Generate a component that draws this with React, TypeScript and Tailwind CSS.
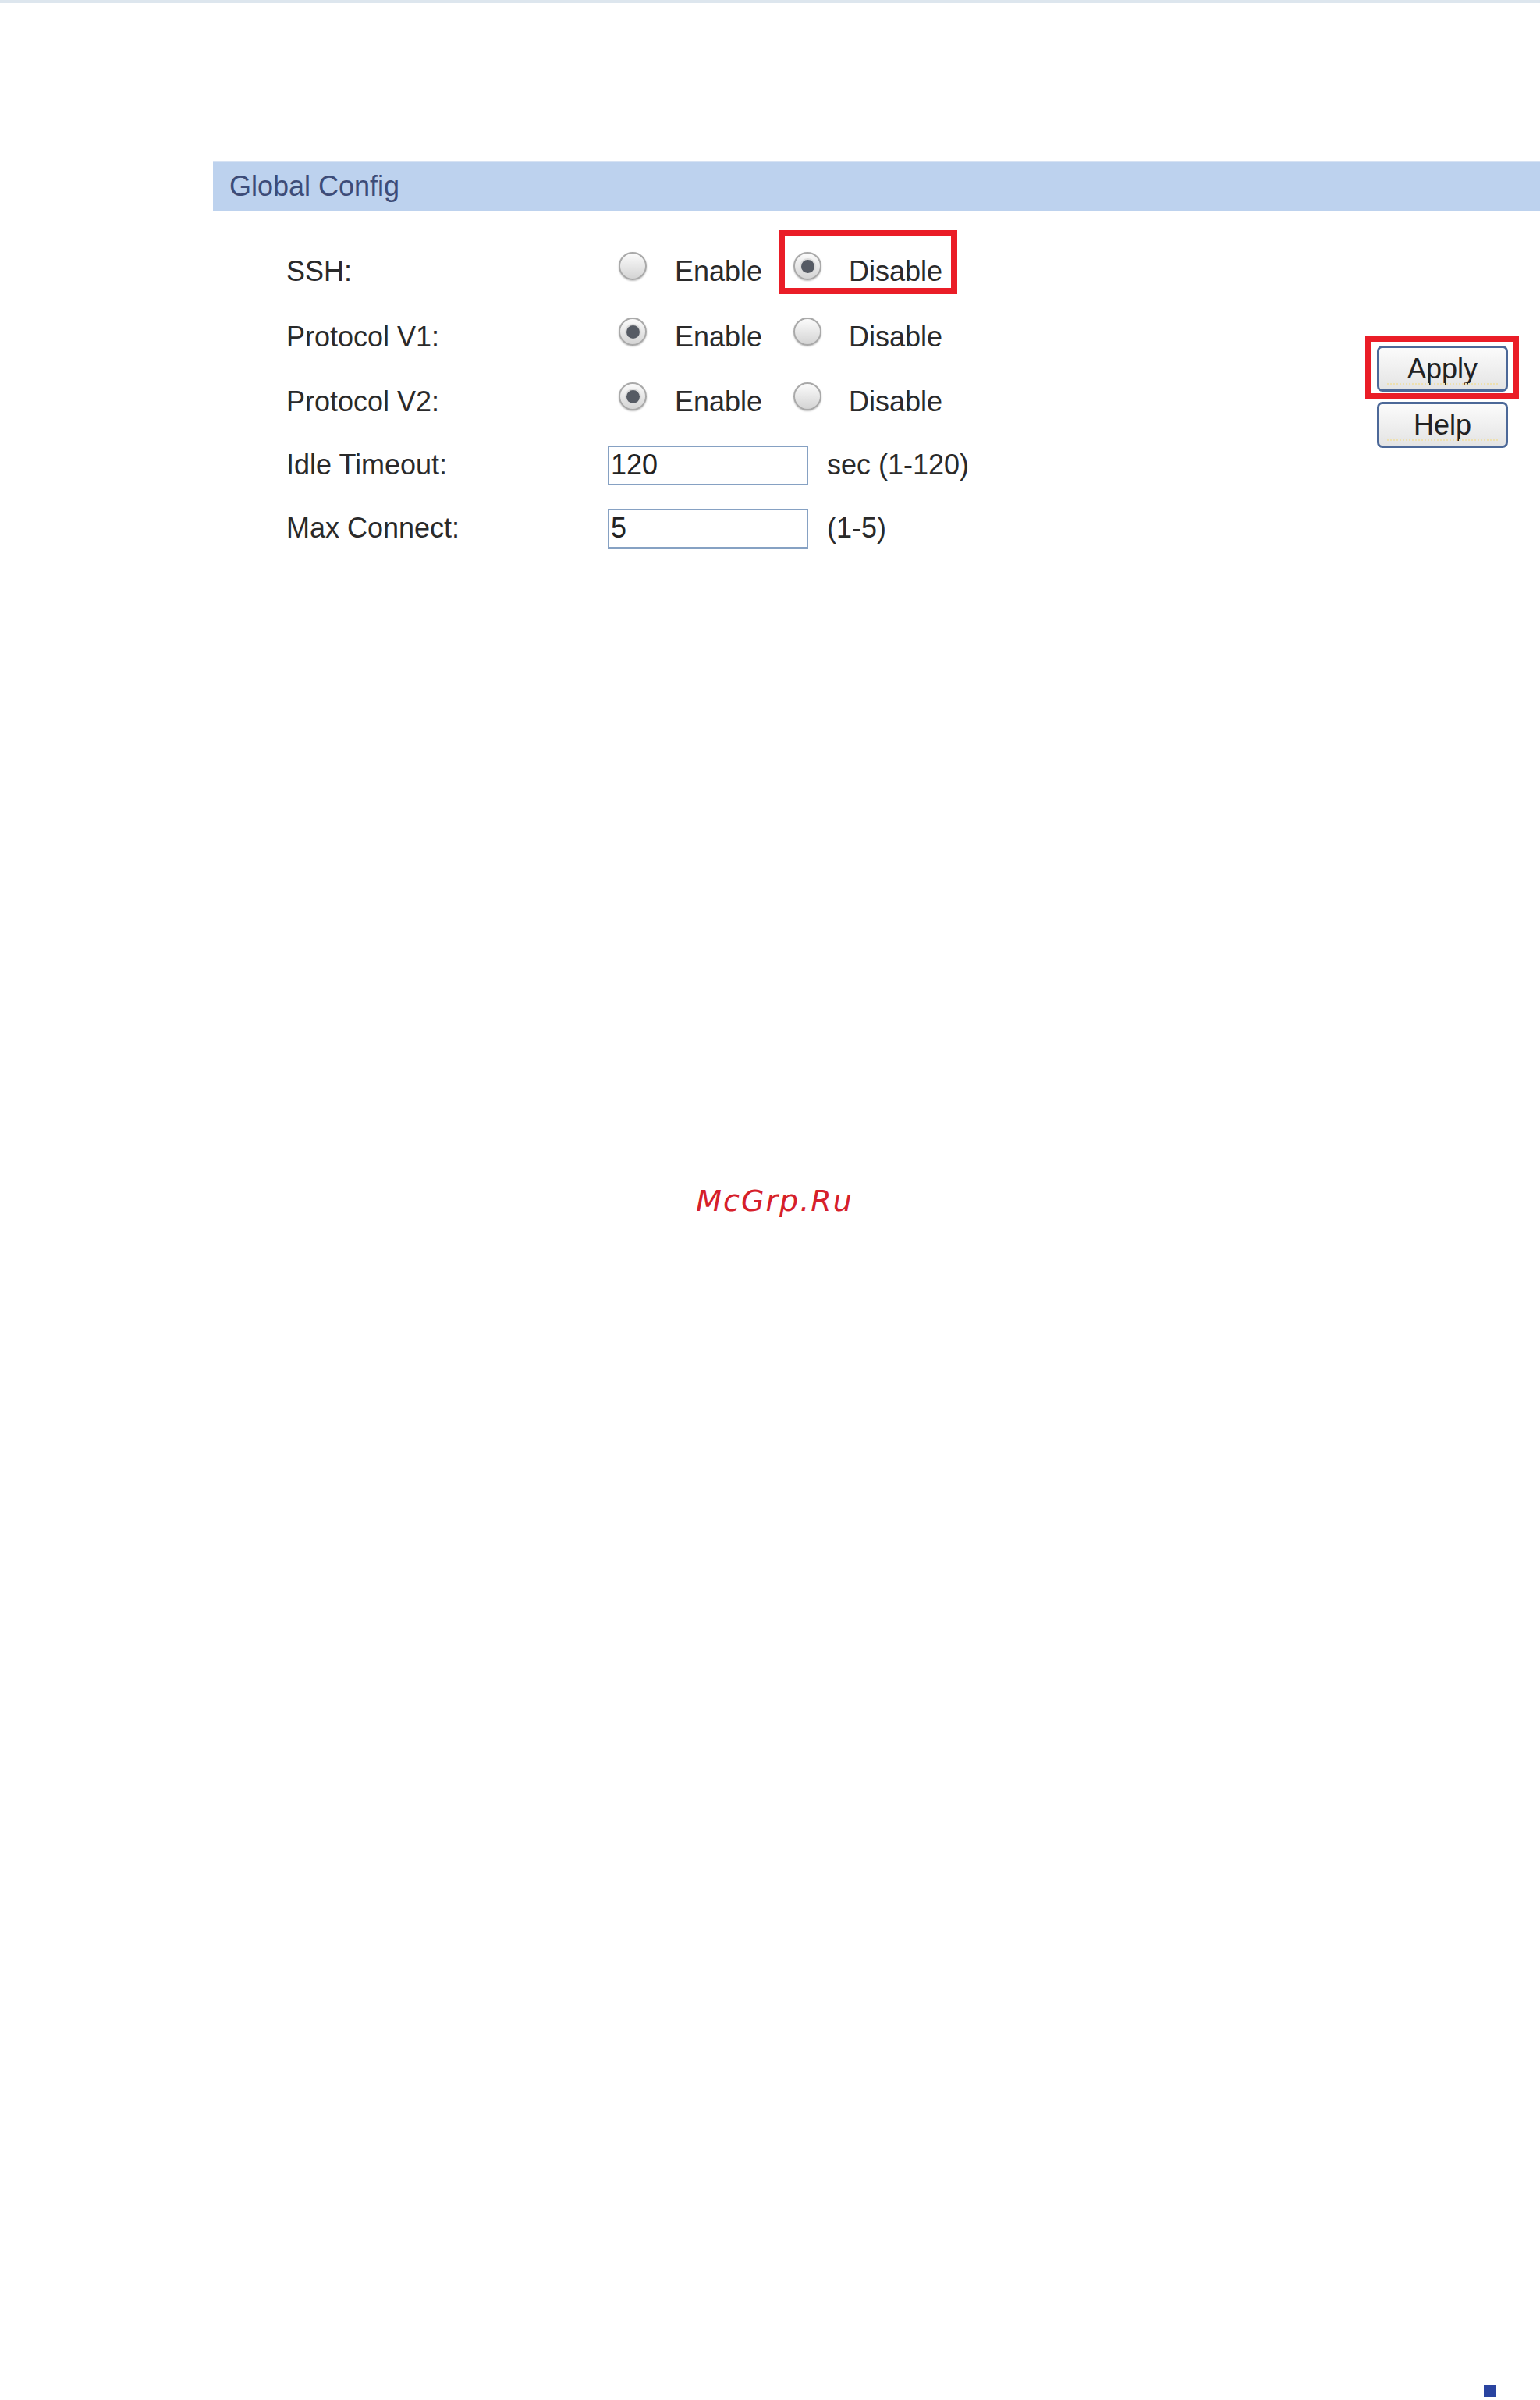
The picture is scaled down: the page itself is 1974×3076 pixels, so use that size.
import React from "react";

function Radio({ checked }: { checked?: boolean }) {
  return (
    <span className="-translate-y-[7px] flex h-[36px] w-[36px] shrink-0 items-center justify-center rounded-full border-2 border-[#a9a9a9] bg-linear-to-b from-[#fbfbfb] to-[#d4d4d4] shadow-[0_1px_2px_rgba(0,0,0,0.25)]">
      {checked ? (
        <span className="h-[17px] w-[17px] rounded-full bg-[#565b64] shadow-[0_0_0_2px_#dcdcdc]" />
      ) : null}
    </span>
  );
}

function RadioRow({
  label,
  enabled,
  highlight,
  h,
}: {
  label: string;
  enabled: boolean;
  highlight?: boolean;
  h: string;
}) {
  return (
    <div className={`flex items-center ${h}`}>
      <span className="w-[426px] leading-[42px]">{label}</span>
      <div className="flex w-[224px] items-center">
        <Radio checked={enabled} />
        <span className="ml-[36px] leading-[42px]">Enable</span>
      </div>
      <div className="relative flex items-center self-stretch">
        <Radio checked={!enabled} />
        <span className="ml-[35px] leading-[42px]">Disable</span>
        {highlight ? (
          <span className="absolute left-[-19px] top-[-11px] h-[82px] w-[229px] border-[8px] border-[#ea1d27]" />
        ) : null}
      </div>
    </div>
  );
}

function InputRow({
  label,
  value,
  hint,
  h,
}: {
  label: string;
  value: string;
  hint: string;
  h: string;
}) {
  return (
    <div className={`flex items-center ${h}`}>
      <span className="w-[412px] leading-[42px]">{label}</span>
      <input
        readOnly
        defaultValue={value}
        className="h-[51px] w-[257px] border-2 border-[#86a1c3] bg-white px-[2px] text-[36px] leading-[42px] text-[#222222] outline-none"
      />
      <span className="ml-[24px] leading-[42px]">{hint}</span>
    </div>
  );
}

function Btn({ children, boxed }: { children: React.ReactNode; boxed?: boolean }) {
  return (
    <div className="relative">
      <div className="relative flex h-[59px] w-[168px] items-center justify-center rounded-[7px] border-[3px] border-[#4c6898] bg-linear-to-b from-[#fbfbfb] to-[#e4e4e4] text-[36px] leading-[40px] text-[#222222]">
        {children}
        <span className="absolute bottom-[6px] left-[10px] right-[10px] border-t-2 border-dotted border-[#eee0b0]" />
      </div>
      {boxed ? (
        <span className="absolute left-[-15px] top-[-13px] h-[82px] w-[197px] border-[8px] border-[#ea1d27]" />
      ) : null}
    </div>
  );
}

export default function App() {
  return (
    <div className="relative h-[3076px] w-full overflow-hidden bg-white font-['Liberation_Sans',Arial,sans-serif] text-[36px] text-[#2a2a2a]">
      <div className="h-[4px] w-full bg-[#dde6ee]" />
      <div className="mt-[202px] ml-[273px] flex h-[65px] items-center border-y border-[#d6e2f3] bg-[#bdd2ee] pl-[21px]">
        <span className="text-[36px] leading-[42px] text-[#3d4c78]">Global Config</span>
      </div>
      <div className="flex items-start">
        <div className="ml-[367px] flex flex-col pt-[35px]">
          <RadioRow label="SSH:" enabled={false} highlight h="h-[84px]" />
          <RadioRow label="Protocol V1:" enabled h="h-[84px]" />
          <RadioRow label="Protocol V2:" enabled h="h-[82px]" />
          <InputRow label="Idle Timeout:" value="120" hint="sec (1-120)" h="h-[80px]" />
          <InputRow label="Max Connect:" value="5" hint="(1-5)" h="h-[82px]" />
        </div>
        <div className="ml-auto flex flex-col gap-[13px] pr-[41px] pt-[172px]">
          <Btn boxed>Apply</Btn>
          <Btn>Help</Btn>
        </div>
      </div>
      <div className="mt-[798px] pl-[12px] text-center font-['DejaVu_Sans',Verdana,sans-serif] text-[38px] italic leading-[46px] tracking-[2px] text-[#d6202a]">
        McGrp.Ru
      </div>
      <div className="mt-[1495px] ml-[1902px] h-[15px] w-[15px] bg-[#2a44a0]" />
    </div>
  );
}
